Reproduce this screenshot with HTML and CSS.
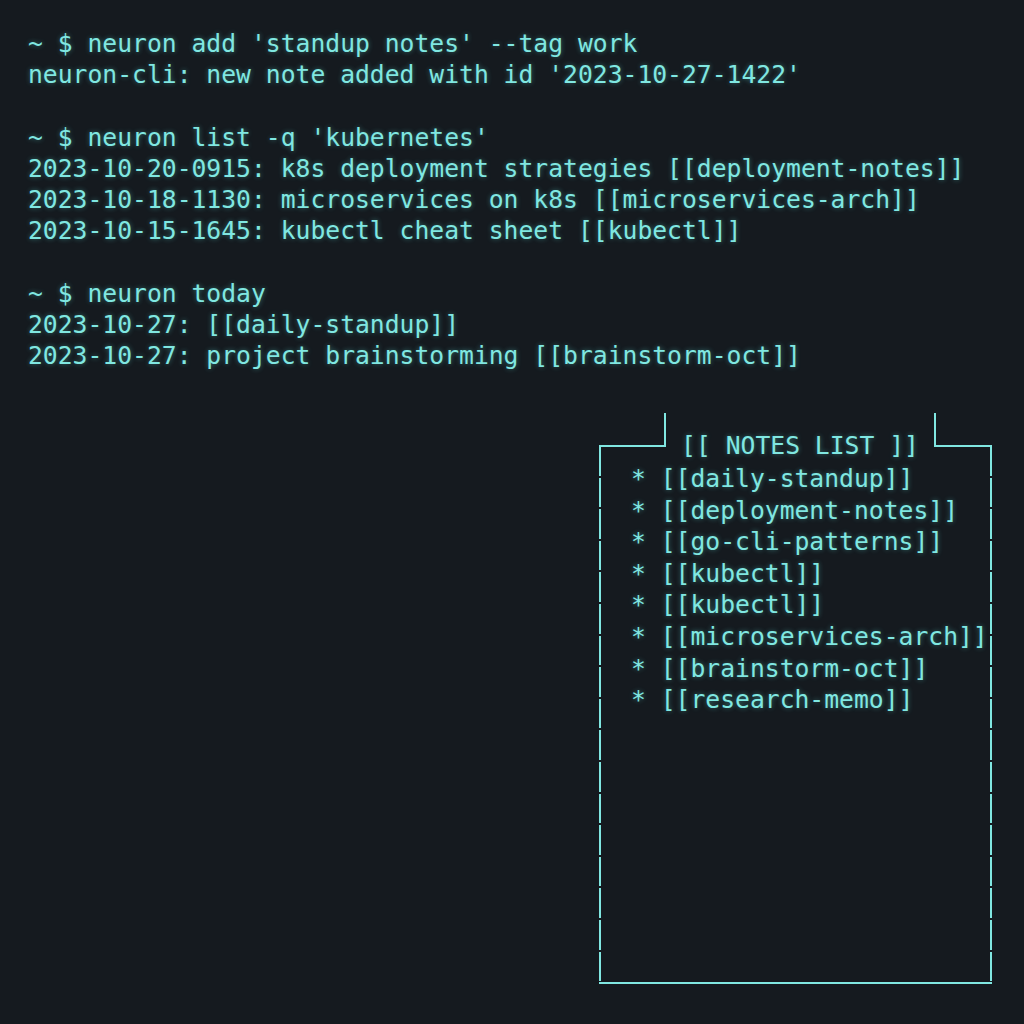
FILE: index.html
```html
<!DOCTYPE html>
<html lang="en">
<head>
<meta charset="utf-8">
<title>neuron terminal</title>
<link rel="stylesheet" href="styles.css">
</head>
<body>
<main class="term">
  <section class="output">
    <div class="line">~ $ neuron add 'standup notes' --tag work</div>
    <div class="line">neuron-cli: new note added with id '2023-10-27-1422'</div>
    <div class="line blank"></div>
    <div class="line">~ $ neuron list -q 'kubernetes'</div>
    <div class="line">2023-10-20-0915: k8s deployment strategies [[deployment-notes]]</div>
    <div class="line">2023-10-18-1130: microservices on k8s [[microservices-arch]]</div>
    <div class="line">2023-10-15-1645: kubectl cheat sheet [[kubectl]]</div>
    <div class="line blank"></div>
    <div class="line">~ $ neuron today</div>
    <div class="line">2023-10-27: [[daily-standup]]</div>
    <div class="line">2023-10-27: project brainstorming [[brainstorm-oct]]</div>
  </section>

  <section class="panel-wrap">
    <div class="panel">
      <div class="panel-head">
        <span class="corner corner-left"></span>
        <span class="panel-title">[[ NOTES LIST ]]</span>
        <span class="corner corner-right"></span>
      </div>
      <div class="panel-body">
        <div class="item">* [[daily-standup]]</div>
        <div class="item">* [[deployment-notes]]</div>
        <div class="item">* [[go-cli-patterns]]</div>
        <div class="item">* [[kubectl]]</div>
        <div class="item">* [[kubectl]]</div>
        <div class="item">* [[microservices-arch]]</div>
        <div class="item">* [[brainstorm-oct]]</div>
        <div class="item">* [[research-memo]]</div>
      </div>
    </div>
  </section>
</main>
</body>
</html>
```

FILE: styles.css
```css
html, body {
  margin: 0;
  padding: 0;
  background: #151a1f;
}

body {
  width: 1024px;
  height: 1024px;
  overflow: hidden;
  font-family: "DejaVu Sans Mono", "Liberation Mono", monospace;
  font-size: 24.7px;
  color: #80e7e1;
  text-shadow: 0 0 5px rgba(90, 220, 212, 0.45);
}

.term {
  display: flex;
  flex-direction: column;
  padding: 28px 0 0 28px;
}

.output {
  display: flex;
  flex-direction: column;
}

.line {
  height: 31.2px;
  line-height: 31.2px;
  white-space: pre;
}

.panel-wrap {
  display: flex;
  justify-content: flex-end;
  padding-right: 32px;
  margin-top: 42px;
}

.panel {
  width: 393px;
  display: flex;
  flex-direction: column;
}

.panel-head {
  display: flex;
  align-items: flex-start;
  height: 34px;
}

.corner {
  height: 34px;
  box-sizing: border-box;
  border-bottom: 2px solid #80e7e1;
}

.corner-left {
  width: 67px;
  border-right: 2px solid #80e7e1;
}

.corner-right {
  width: 58px;
  border-left: 2px solid #80e7e1;
}

.panel-title {
  flex: 1;
  text-align: center;
  white-space: pre;
  line-height: 31px;
  margin-top: 17px;
}

.panel-body {
  position: relative;
  height: 519px;
  padding: 16px 0 0 32px;
  border-bottom: 2px solid #80e7e1;
  display: flex;
  flex-direction: column;
}

.panel-body::before,
.panel-body::after {
  content: "";
  position: absolute;
  top: -1px;
  bottom: -2px;
  width: 2px;
  background: repeating-linear-gradient(to bottom, #80e7e1 0 29.5px, transparent 29.5px 31.6px);
}

.panel-body::before {
  left: 0;
}

.panel-body::after {
  right: 0;
}

.item {
  height: 31.6px;
  line-height: 31.6px;
  white-space: pre;
}
```
